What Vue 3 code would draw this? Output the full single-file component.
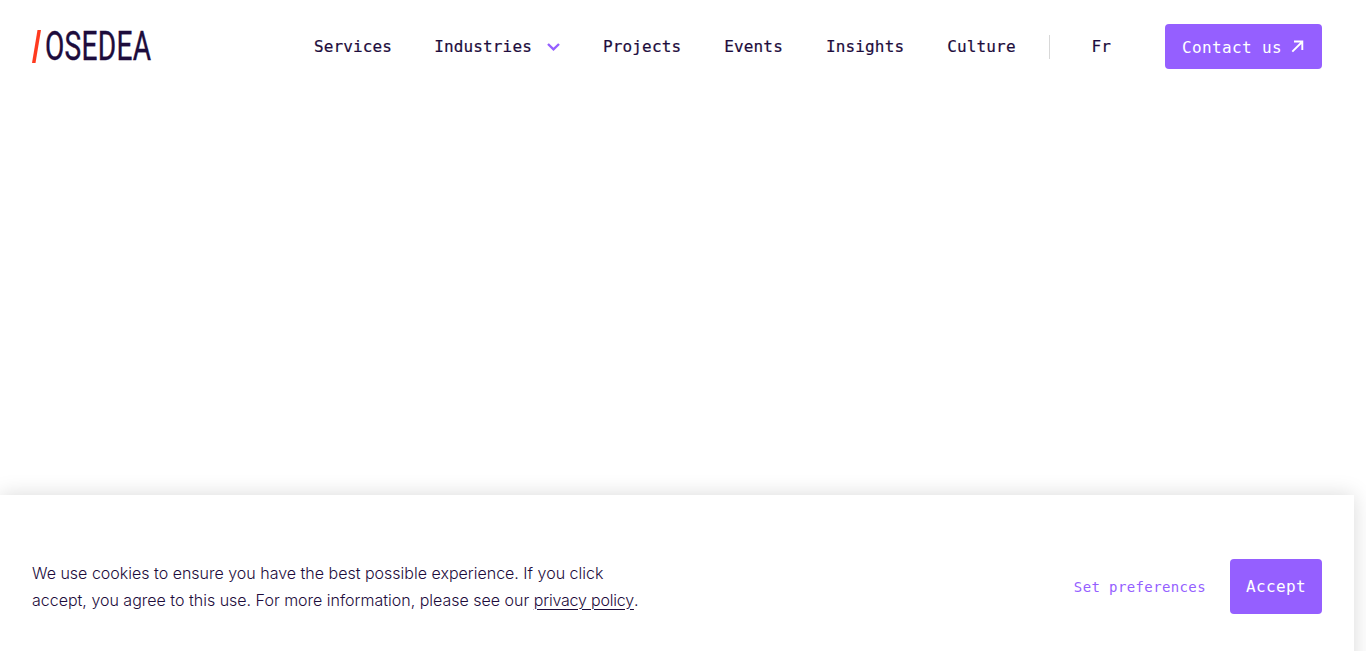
<script setup>
const navBefore = ['Services']
const navAfter = ['Projects', 'Events', 'Insights', 'Culture']
</script>

<template>
  <div class="page">
    <header class="header">
      <a class="logo"><span class="slash"></span><span class="word">OSEDEA</span></a>
      <nav class="nav">
        <a v-for="n in navBefore" :key="n" class="link">{{ n }}</a>
        <a class="link dropdown">Industries
          <svg class="chev" width="13" height="8" viewBox="0 0 13 8" fill="none"><path d="M1 1 6.5 6.3 12 1" stroke="#955fff" stroke-width="2.4"/></svg>
        </a>
        <a v-for="n in navAfter" :key="n" class="link">{{ n }}</a>
        <span class="divider"></span>
        <a class="link">Fr</a>
        <a class="contact"><span class="label">Contact us</span>
          <svg width="13" height="13" viewBox="0 0 13 13" fill="none"><path d="M1.3 11.7 11 2M3 1.5H11.3V10" stroke="#fff" stroke-width="1.9"/></svg>
        </a>
      </nav>
    </header>
    <section class="banner">
      <p class="msg">We use cookies to ensure you have the best possible experience. If you click<br>accept, you agree to this use. For more information, please see our <a class="policy">privacy policy</a>.</p>
      <div class="actions">
        <a class="prefs">Set preferences</a>
        <a class="accept">Accept</a>
      </div>
    </section>
  </div>
</template>

<style>
html, body { margin: 0; background: #fff; overflow: hidden; }
</style>

<style scoped>
.page { width: 1354px; height: 651px; position: relative; overflow: visible; color: #1d0c3c; font-family: "DejaVu Sans Mono", monospace; }
.header { display: flex; justify-content: space-between; align-items: flex-start; padding: 24px 32px 0; }
.logo { display: flex; align-items: center; height: 45px; }
.slash { display: block; width: 9px; height: 33px; background: #ff3a1f; clip-path: polygon(5.5px 0, 9px 0, 3.5px 100%, 0 100%); margin-right: 4px; }
.word { font-family: "Roboto", sans-serif; font-size: 41px; line-height: 45px; letter-spacing: .4px; display: inline-block; transform: scaleX(.685); transform-origin: left center; width: 105px; -webkit-text-stroke: .4px #1d0c3c; }
.nav { display: flex; align-items: center; height: 45px; gap: 43px; }
.link { font-size: 16px; letter-spacing: .15px; white-space: nowrap; -webkit-text-stroke: .2px #1d0c3c; }
.dropdown { display: flex; align-items: center; gap: 15px; margin-left: -1px; }
.divider { width: 1px; height: 24px; background: #d8d8d8; margin-left: -9.3px; margin-right: -2px; }
.contact { display: flex; align-items: center; gap: 9px; height: 45px; box-sizing: border-box; padding: 0 18px 0 17px; margin-left: 11px; border-radius: 4px; background: #955fff; color: #fff; font-size: 16px; letter-spacing: .37px; white-space: nowrap; }
.label { position: relative; top: 1px; }
.banner { position: absolute; left: 0; right: 0; top: 495px; height: 183px; box-sizing: border-box; padding: 64px 32px; display: flex; justify-content: space-between; align-items: center; background: #fff; box-shadow: 0 0 20px rgba(0,0,0,.15); }
.msg { margin: 0; font-family: "Inter", sans-serif; font-size: 16px; font-weight: 350; line-height: 27px; letter-spacing: 0; }
.policy { letter-spacing: -.2px; text-decoration: underline; text-underline-offset: 3px; text-decoration-thickness: 1px; }
.actions { display: flex; align-items: center; gap: 24px; }
.prefs { font-size: 14px; letter-spacing: .38px; color: #955fff; }
.accept { display: flex; align-items: center; justify-content: center; width: 92px; height: 55px; border-radius: 4px; background: #955fff; color: #fff; font-size: 16px; letter-spacing: .37px; }
</style>
